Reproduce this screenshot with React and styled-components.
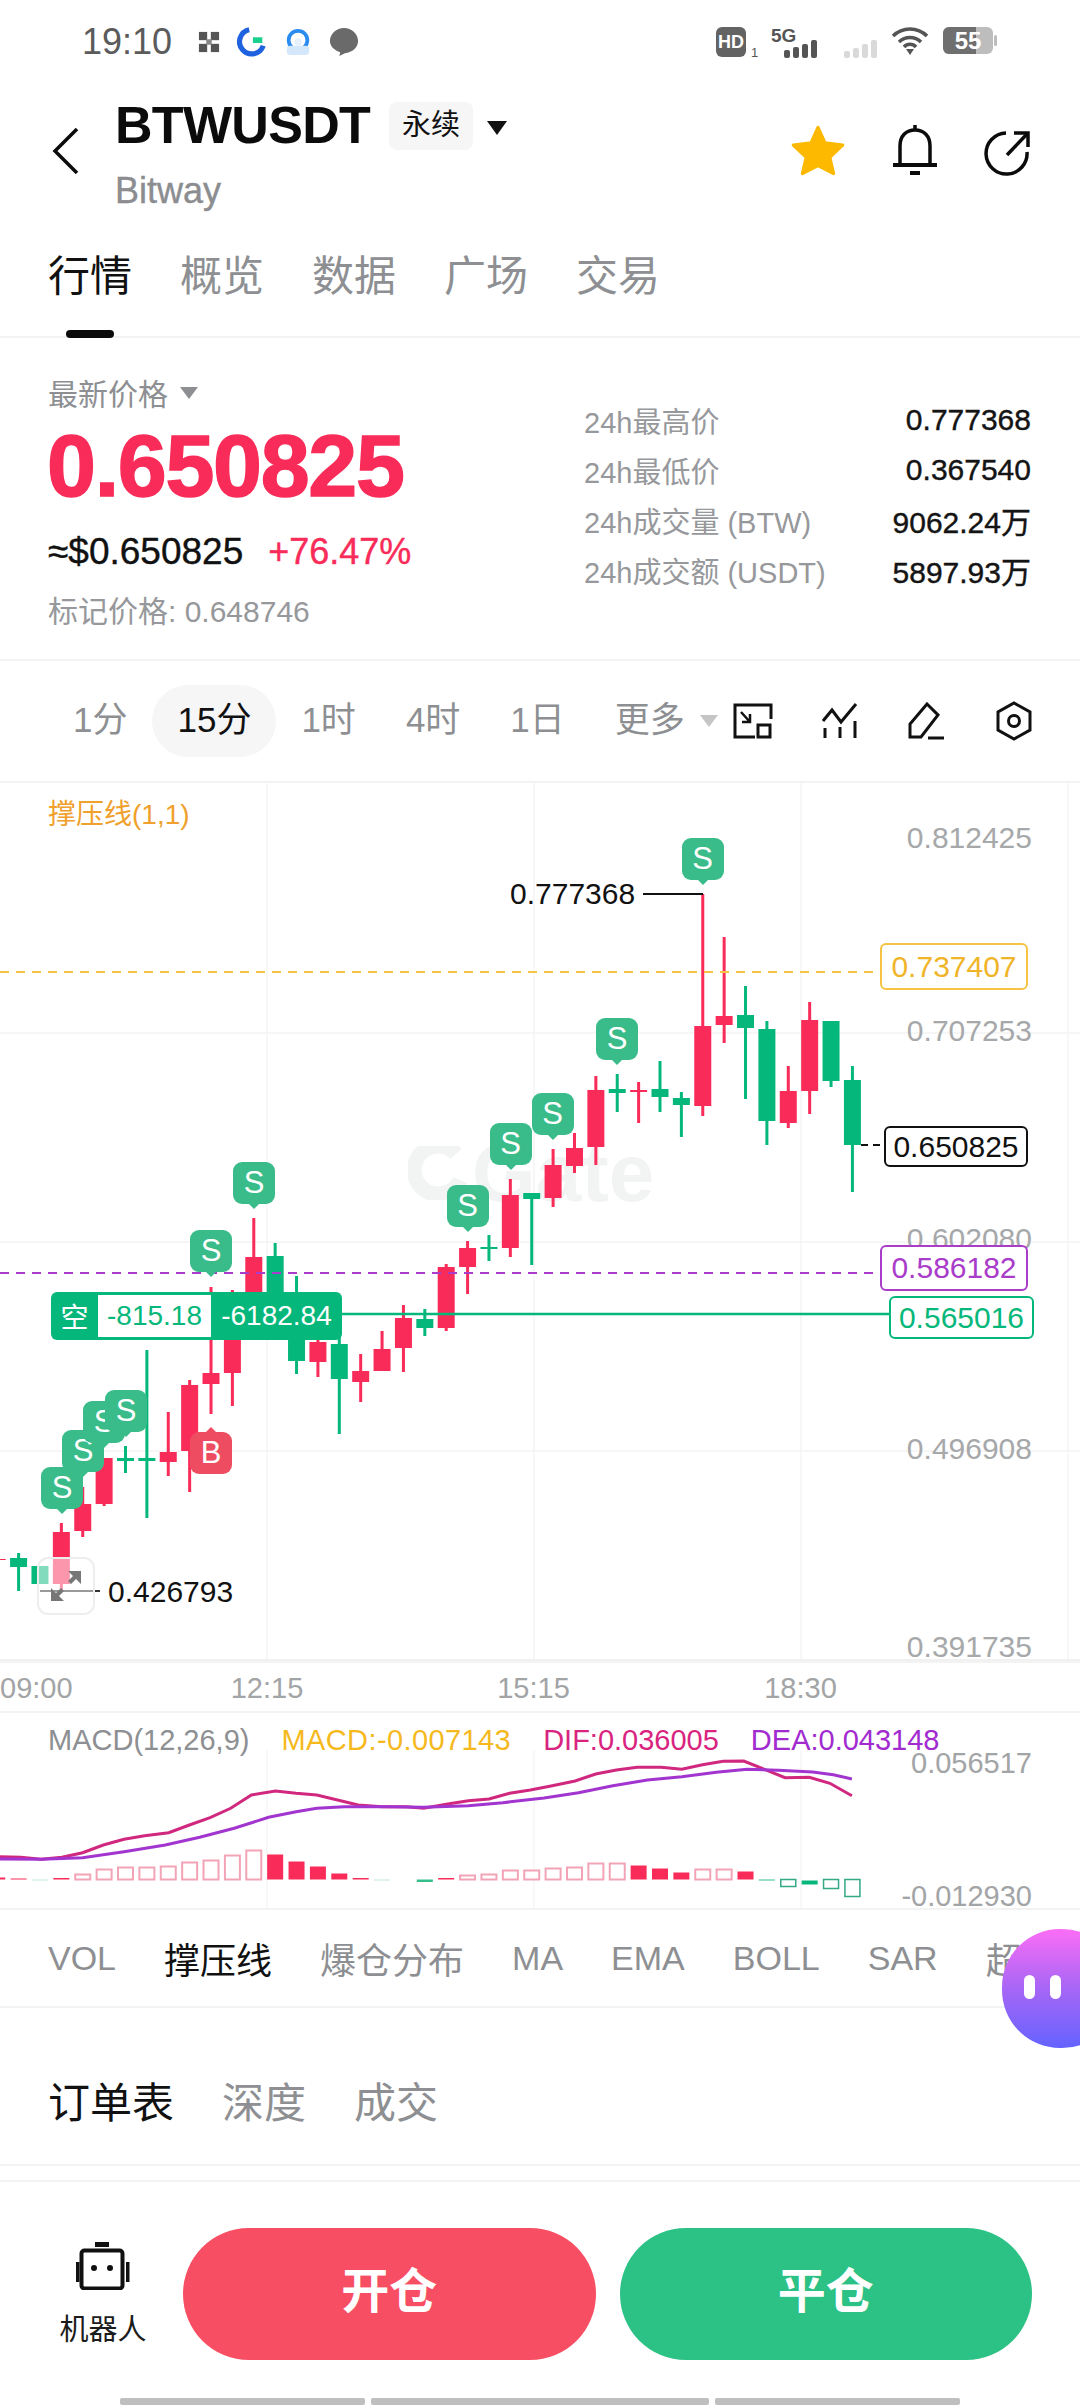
import React from 'react';
import styled, { createGlobalStyle } from 'styled-components';

const SANS = `"Liberation Sans", "Noto Sans CJK SC", sans-serif`;
const CHART_TOP = 783;
const RED = '#f92c59';
const GREEN = '#05b77a';

const GlobalStyle = createGlobalStyle`
  html, body { margin: 0; padding: 0; background: #fff; }
  * { box-sizing: border-box; }
`;

const Page = styled.div`
  position: relative;
  width: 1080px;
  height: 2408px;
  overflow: hidden;
  background: #fff;
  color: #111;
  font-family: ${SANS};
`;

/* status bar */
const StatusBar = styled.div`
  height: 84px;
  display: flex;
  align-items: flex-start;
  justify-content: space-between;
  padding: 26px 83px 0 82px;
`;
const StatusLeft = styled.div`
  display: flex;
  align-items: center;
  gap: 17px;
`;
const Clock = styled.span`
  font-size: 36px;
  line-height: 32px;
  color: #5b5b5b;
  margin-right: 9px;
`;
const StatusRight = styled.div`
  display: flex;
  align-items: flex-start;
  gap: 12px;
`;
const Dimmed = styled.span`
  display: block;
  margin: 14px 0 0 11px;
`;

/* header */
const Header = styled.header`
  height: 152px;
  display: flex;
  padding: 0 50px 0 52px;
`;
const BackBtn = styled.div`
  width: 63px;
  padding-top: 44px;
`;
const TitleBlock = styled.div`
  display: flex;
  flex-direction: column;
`;
const TitleRow = styled.div`
  display: flex;
  align-items: flex-start;
  margin-top: 18px;
`;
const Title = styled.h1`
  margin: 0 19px 0 0;
  font-size: 52px;
  line-height: 47px;
  font-weight: 700;
  letter-spacing: -0.7px;
  color: #0b0b0b;
`;
const Tag = styled.span`
  width: 84px;
  height: 48px;
  border-radius: 8px;
  background: #f6f6f6;
  font-size: 29px;
  line-height: 46px;
  text-align: center;
`;
const Caret = styled.i`
  display: block;
  flex-shrink: 0;
  margin: ${p => p.$margin || '0'};
  border-left: ${p => p.$size}px solid transparent;
  border-right: ${p => p.$size}px solid transparent;
  border-top: ${p => p.$size * 1.4}px solid ${p => p.$color};
`;
const SubTitle = styled.div`
  margin-top: 21px;
  font-size: 36px;
  line-height: 40px;
  -webkit-text-stroke: 0.4px #8b8d90;
  color: #8b8d90;
`;
const HeaderActions = styled.div`
  margin-left: auto;
  padding-top: 36px;
  display: flex;
  align-items: flex-start;
  gap: 48px;
`;

/* main tabs */
const Tabs = styled.nav`
  height: 102px;
  display: flex;
  gap: 48px;
  padding: 19px 0 0 48px;
  border-bottom: 2px solid #f3f3f3;
`;
const Tab = styled.div`
  position: relative;
  width: 84px;
  height: 83px;
  font-size: 42px;
  line-height: 44px;
  text-align: center;
  color: ${p => (p.$active ? '#111' : '#8d8f92')};
  ${p => p.$active && `
    &::after {
      content: '';
      position: absolute;
      left: 18px;
      bottom: 0;
      width: 48px;
      height: 8px;
      border-radius: 4px;
      background: #0b0b0b;
    }
  `}
`;

/* price block */
const PriceSection = styled.section`
  height: 323px;
  display: flex;
  border-bottom: 2px solid #f3f3f3;
`;
const PriceLeft = styled.div`
  width: 584px;
  padding: 35px 0 0 47px;
`;
const PriceLabel = styled.div`
  display: flex;
  align-items: center;
  height: 38px;
  margin-left: 1px;
  font-size: 30px;
  color: #8d8f92;
`;
const BigPrice = styled.div`
  margin-top: 12px;
  height: 86px;
  font-size: 88px;
  line-height: 86px;
  font-weight: 700;
  letter-spacing: -1.3px;
  -webkit-text-stroke: 1.5px ${RED};
  color: ${RED};
`;
const PriceSub = styled.div`
  margin: 21px 0 0 1px;
  display: flex;
  gap: 25px;
  height: 44px;
  align-items: center;
  font-size: 37px;
  -webkit-text-stroke: 0.4px currentColor;
`;
const Change = styled.span`
  font-size: 36px;
  color: ${RED};
`;
const MarkPrice = styled.div`
  margin: 18px 0 0 1px;
  font-size: 30px;
  line-height: 40px;
  color: #96989b;
`;
const Stats = styled.div`
  flex: 1;
  padding: 57px 49px 0 0;
`;
const StatRow = styled.div`
  height: 50px;
  display: flex;
  justify-content: space-between;
  align-items: center;
  font-size: 30px;
`;
const StatLabel = styled.span`
  font-size: 29px;
  color: #96989b;
`;
const StatValue = styled.span`
  color: #141414;
  -webkit-text-stroke: 0.4px #141414;
`;

/* interval row */
const IntervalRow = styled.div`
  height: 122px;
  display: flex;
  align-items: center;
  padding: 0 48px;
  border-bottom: 2px solid #f3f3f3;
`;
const Interval = styled.div`
  flex-shrink: 0;
  height: 72px;
  padding: 0 25px;
  border-radius: 36px;
  font-size: 35px;
  line-height: 70px;
  white-space: nowrap;
  color: ${p => (p.$active ? '#111' : '#8d8f92')};
  background: ${p => (p.$active ? '#f6f6f6' : 'transparent')};
`;
const ToolIcons = styled.div`
  margin-left: auto;
  display: flex;
  align-items: center;
  gap: 50px;
`;

/* candle chart */
const ChartWrap = styled.div`
  position: relative;
  height: 878px;
`;
const ChartSvg = styled.svg`
  position: absolute;
  left: 0;
  top: 0;
`;
const Watermark = styled.div`
  position: absolute;
  left: 408px;
  top: ${1146 - CHART_TOP}px;
  display: flex;
  align-items: center;
  gap: 4px;
  font-size: 82px;
  line-height: 54px;
  font-weight: 700;
  color: #f2f4f4;
`;
const IndicatorName = styled.div`
  position: absolute;
  left: 48px;
  top: ${797 - CHART_TOP}px;
  font-size: 28px;
  line-height: 36px;
  color: #f0a02c;
`;
const AxisLabel = styled.div`
  position: absolute;
  right: 48px;
  top: ${p => p.$y - CHART_TOP - 13}px;
  font-size: 30px;
  line-height: 26px;
  color: #a6a8aa;
`;
const PriceTag = styled.div`
  position: absolute;
  left: ${p => p.$x}px;
  top: ${p => p.$y - CHART_TOP}px;
  width: ${p => p.$w}px;
  height: ${p => p.$h}px;
  border: 2px solid ${p => p.$border};
  border-radius: 6px;
  background: #fff;
  font-size: 30px;
  line-height: ${p => p.$h - 4}px;
  text-align: center;
  color: ${p => p.$color};
`;
const ExtremeLabel = styled.div`
  position: absolute;
  left: ${p => p.$x}px;
  top: ${p => p.$y - CHART_TOP - 18}px;
  font-size: 30px;
  line-height: 36px;
  color: #111;
`;
const Marker = styled.div`
  position: absolute;
  left: ${p => p.$x - 21}px;
  top: ${p => p.$y - CHART_TOP}px;
  width: 42px;
  height: 42px;
  border-radius: 9px;
  background: ${p => (p.$buy ? '#ee4d61' : '#39bc89')};
  color: #fff;
  font-size: 31px;
  line-height: 42px;
  text-align: center;
  &::after {
    content: '';
    position: absolute;
    left: 16px;
    ${p => (p.$buy ? 'top: -5px;' : 'bottom: -5px;')}
    border-left: 5px solid transparent;
    border-right: 5px solid transparent;
    ${p => (p.$buy ? 'border-bottom: 5px solid #ee4d61;' : 'border-top: 5px solid #39bc89;')}
  }
`;
const PositionTag = styled.div`
  position: absolute;
  left: 51px;
  top: ${1292 - CHART_TOP}px;
  width: 291px;
  height: 48px;
  display: flex;
  align-items: center;
  padding: 3px 0;
  border-radius: 6px;
  background: ${GREEN};
  color: #fff;
  font-size: 28px;
`;
const PositionSide = styled.span`
  width: 47px;
  text-align: center;
`;
const PositionPnl = styled.span`
  width: 113px;
  height: 42px;
  line-height: 42px;
  text-align: center;
  background: #fff;
  color: ${GREEN};
`;
const PositionValue = styled.span`
  flex: 1;
  text-align: center;
`;
const FullscreenBtn = styled.div`
  position: absolute;
  left: 37px;
  top: ${1557 - CHART_TOP}px;
  width: 58px;
  height: 58px;
  border: 2px solid #eeeeee;
  border-radius: 11px;
  background: rgba(255, 255, 255, 0.5);
  display: flex;
  align-items: center;
  justify-content: center;
`;

/* time axis */
const TimeAxis = styled.div`
  height: 52px;
  display: grid;
  grid-template-columns: 134px 266px 267px 267px;
  border-top: 2px solid #f3f3f3;
  border-bottom: 2px solid #f3f3f3;
  font-size: 29px;
  line-height: 50px;
  color: #a2a4a6;
`;
const TimeTick = styled.span`
  text-align: ${p => (p.$first ? 'left' : 'center')};
`;

/* MACD */
const MacdPanel = styled.div`
  position: relative;
  height: 197px;
  border-bottom: 2px solid #f3f3f3;
`;
const MacdLegend = styled.div`
  position: relative;
  display: flex;
  gap: 32px;
  padding: 9px 0 0 48px;
  font-size: 29px;
  line-height: 36px;
`;
const LegendItem = styled.span`
  color: ${p => p.$color};
  ${p => p.$spread && 'letter-spacing: 0.4px;'}
`;
const MacdAxis = styled.div`
  position: absolute;
  right: 48px;
  top: ${p => p.$y - 1713 - 18}px;
  font-size: 29px;
  line-height: 36px;
  color: #a2a4a6;
`;

/* indicator strip */
const IndicatorRow = styled.div`
  height: 98px;
  display: flex;
  align-items: center;
  gap: 48px;
  padding-left: 48px;
  white-space: nowrap;
  border-bottom: 2px solid #f3f3f3;
`;
const Indicator = styled.span`
  font-size: ${p => (p.$latin ? 34 : 36)}px;
  color: ${p => (p.$active ? '#111' : '#8d8f92')};
`;

/* order tabs */
const OrderTabs = styled.div`
  height: 158px;
  display: flex;
  align-items: flex-start;
  gap: 48px;
  padding: 72px 0 0 48px;
  border-bottom: 2px solid #f3f3f3;
`;
const OrderTab = styled.span`
  font-size: 42px;
  line-height: 48px;
  color: ${p => (p.$active ? '#111' : '#8d8f92')};
`;
const Spacer = styled.div`
  height: 16px;
  border-bottom: 2px solid #f3f3f3;
`;

/* bottom actions */
const ActionBar = styled.div`
  display: flex;
  align-items: flex-start;
  gap: 24px;
  padding: 46px 48px 0 0;
`;
const RobotBtn = styled.div`
  flex: 0 0 159px;
  padding: 14px 0 0 47px;
  display: flex;
  flex-direction: column;
  align-items: center;
  font-size: 29px;
  line-height: 36px;
  color: #1c1c1c;
  gap: 22px;
`;
const TradeBtn = styled.div`
  flex: 1;
  height: 132px;
  border-radius: 66px;
  background: ${p => p.$bg};
  color: #fff;
  font-size: 48px;
  font-weight: 700;
  line-height: 128px;
  text-align: center;
`;

/* gesture bar */
const GestureBar = styled.div`
  position: absolute;
  left: 120px;
  top: 2398px;
  display: flex;
  gap: 6px;
`;
const GestureSeg = styled.i`
  display: block;
  width: ${p => p.$w}px;
  height: 7px;
  border-radius: 2px;
  background: #bfbfbf;
`;

/* floating assistant */
const Bubble = styled.div`
  position: absolute;
  left: 1002px;
  top: 1929px;
  width: 118px;
  height: 119px;
  border-radius: 58px;
  background: linear-gradient(180deg, #fb6df6 0%, #a766f6 50%, #6463ff 100%);
  display: flex;
  gap: 15px;
  padding: 46px 0 0 22px;
`;
const BubbleEye = styled.i`
  display: block;
  width: 11px;
  height: 24px;
  border-radius: 6px;
  background: #fff;
`;

const candles = [
  ['r', 1558, 1559, 1560, 1561],
  ['g', 1553, 1558, 1567, 1591],
  ['g', 1566, 1566, 1584, 1584],
  ['r', 1523, 1532, 1584, 1592],
  ['r', 1487, 1504, 1531, 1537],
  ['r', 1458, 1458, 1504, 1506],
  ['g', 1446, 1458, 1461, 1473],
  ['g', 1350, 1458, 1461, 1518],
  ['r', 1412, 1452, 1462, 1476],
  ['r', 1380, 1385, 1451, 1492],
  ['r', 1287, 1373, 1384, 1414],
  ['r', 1290, 1300, 1373, 1406],
  ['r', 1218, 1257, 1335, 1335],
  ['g', 1243, 1256, 1335, 1335],
  ['g', 1276, 1330, 1361, 1374],
  ['r', 1340, 1342, 1362, 1377],
  ['g', 1335, 1344, 1379, 1434],
  ['r', 1354, 1371, 1382, 1402],
  ['r', 1331, 1349, 1371, 1371],
  ['r', 1305, 1318, 1348, 1372],
  ['g', 1309, 1319, 1328, 1336],
  ['r', 1264, 1267, 1328, 1331],
  ['r', 1241, 1248, 1267, 1294],
  ['g', 1235, 1247, 1249, 1261],
  ['r', 1179, 1195, 1248, 1257],
  ['g', 1193, 1193, 1199, 1265],
  ['r', 1149, 1165, 1198, 1207],
  ['r', 1133, 1148, 1166, 1173],
  ['r', 1076, 1090, 1147, 1165],
  ['g', 1074, 1089, 1093, 1112],
  ['r', 1082, 1090, 1092, 1123],
  ['g', 1061, 1089, 1097, 1112],
  ['g', 1092, 1098, 1105, 1137],
  ['r', 894, 1026, 1106, 1116],
  ['r', 937, 1016, 1025, 1043],
  ['g', 986, 1015, 1028, 1099],
  ['g', 1021, 1029, 1121, 1145],
  ['r', 1066, 1091, 1123, 1128],
  ['r', 1002, 1020, 1091, 1114],
  ['g', 1021, 1021, 1081, 1087],
  ['g', 1066, 1080, 1145, 1192],
];
const candleX = i => 18.6 + 21.38 * (i - 1);

const markers = [
  [62, 1467], [83, 1430], [104, 1401], [126, 1390], [211, 1230], [254, 1162],
  [467.6, 1185], [510.6, 1123], [552.6, 1093], [617, 1018], [702.7, 838],
];

// [type, height from the zero line], s solid red, h hollow red, g/gb green, gh hollow green, fg faint green
const macdBars = [
  ['s', 2], ['s', 1], ['fg', -1], ['s', 1.5], ['h', 5], ['h', 10], ['h', 12], ['h', 12], ['h', 13], ['h', 17],
  ['h', 19], ['h', 24], ['h', 29], ['s', 25], ['s', 18], ['s', 13], ['s', 6], ['s', 1.5], ['fg', -1], null,
  ['g', -2.5], ['s', 1.5], ['h', 4], ['h', 5], ['h', 9], ['h', 9], ['h', 11], ['h', 12], ['h', 16], ['h', 16],
  ['s', 14], ['s', 11], ['s', 7], ['h', 10], ['h', 10], ['s', 8], ['g', -1], ['gh', -7], ['gb', -4], ['gh', -9], ['gh', -17],
];

const dif = [[0,530],[30,532],[60,538],[90,532],[120,518],[150,495],[180,478],[210,467],[245,458],[275,435],[305,413],[335,385],[365,345],[400,333],[430,340],[460,345],[490,360],[520,375],[555,380],[590,380],[615,385],[650,372],[680,362],[710,357],[740,340],[770,330],[800,318],[835,303],[865,282],[895,270],[925,262],[960,262],[990,268],[1020,254],[1050,244],[1080,243],[1110,268],[1140,293],[1175,292],[1205,310],[1237,347]];
const dea = [[0,537],[60,538],[120,533],[180,515],[240,495],[290,472],[340,445],[390,412],[430,395],[460,385],[500,380],[560,380],[615,382],[680,377],[730,368],[790,354],[840,338],[890,317],[940,300],[990,290],[1040,277],[1085,268],[1130,271],[1180,276],[1210,284],[1237,297]];
const toLine = pts => pts.map(([x, y]) => `${(x / 1.452).toFixed(1)},${(1680 + y / 3).toFixed(1)}`).join(' ');

const CandleChart = () => (
  <ChartSvg width="1080" height="878" viewBox={`0 ${CHART_TOP} 1080 878`}>
    {[267, 534, 801, 1068].map(x => (
      <line key={x} x1={x} x2={x} y1={CHART_TOP} y2={1660} stroke="#f5f5f5" strokeWidth="1.5" />
    ))}
    {[1033, 1242, 1451].map(y => (
      <line key={y} x1="0" x2="1080" y1={y} y2={y} stroke="#f3f3f3" strokeWidth="1.5" />
    ))}
    <line x1="0" x2="1080" y1="1660" y2="1660" stroke="#f1f1f1" strokeWidth="2" />
    {candles.map(([c, high, top, bottom, low], i) => {
      const x = candleX(i);
      const fill = c === 'r' ? RED : GREEN;
      return (
        <g key={i} fill={fill}>
          <rect x={x - 1.5} y={high} width="3" height={low - high} />
          <rect x={x - 8.5} y={top} width="17" height={bottom - top} />
        </g>
      );
    })}
    <line x1="0" x2="880" y1="972" y2="972" stroke="#f6c344" strokeWidth="2" strokeDasharray="9 7" />
    <line x1="0" x2="880" y1="1273" y2="1273" stroke="#a93cc9" strokeWidth="2" strokeDasharray="9 7" />
    <line x1="340" x2="889" y1="1314" y2="1314" stroke={GREEN} strokeWidth="2.5" />
    <line x1="861" x2="884" y1="1145" y2="1145" stroke="#111" strokeWidth="2" strokeDasharray="7 5" />
    <line x1="643" x2="703" y1="894" y2="894" stroke="#111" strokeWidth="2" />
    <line x1="40" x2="100" y1="1591" y2="1591" stroke="#333" strokeWidth="2" />
  </ChartSvg>
);

const MacdChart = () => (
  <ChartSvg width="1080" height="197" viewBox="0 1713 1080 197">
    {[267, 534, 801].map(x => (
      <line key={x} x1={x} x2={x} y1="1750" y2="1909" stroke="#f6f6f6" strokeWidth="1.5" />
    ))}
    {macdBars.map((bar, i) => {
      if (!bar) return null;
      const [type, h] = bar;
      const x = candleX(i);
      const zero = 1879.5;
      const y = h > 0 ? zero - h : zero;
      const height = Math.abs(h);
      if (type === 's') return <rect key={i} x={x - 8} y={y} width="16" height={height} fill={RED} />;
      if (type === 'h') return <rect key={i} x={x - 7.5} y={y} width="15" height={height} fill="#fff" stroke="#f2a3b6" strokeWidth="2" />;
      if (type === 'fg') return <rect key={i} x={x - 8} y={y} width="16" height={height} fill="#bfe8d8" />;
      if (type === 'g') return <rect key={i} x={x - 8} y={y} width="16" height={height} fill="#35bd8c" />;
      if (type === 'gb') return <rect key={i} x={x - 8} y={zero + 1} width="16" height={height} fill={GREEN} />;
      return <rect key={i} x={x - 7.5} y={y} width="15" height={height} fill="#fff" stroke="#35a886" strokeWidth="1.5" />;
    })}
    <polyline points={toLine(dif)} fill="none" stroke="#d1287f" strokeWidth="3" />
    <polyline points={toLine(dea)} fill="none" stroke="#a235cf" strokeWidth="3" />
  </ChartSvg>
);

const StatusIcons = () => (
  <>
    <svg width="22" height="22" viewBox="0 0 24 24">
      <g fill="#555">
        <rect x="1" y="1" width="9" height="9" />
        <rect x="14" y="1" width="9" height="9" />
        <rect x="1" y="14" width="9" height="9" />
        <rect x="14" y="14" width="9" height="9" />
        <rect x="9" y="9" width="6" height="6" fill="#888" />
      </g>
    </svg>
    <svg width="30" height="30" viewBox="0 0 32 32">
      <path d="M13 3 A13 13 0 1 0 28 20" fill="none" stroke="#1f62e0" strokeWidth="5.5" />
      <rect x="17" y="11" width="10" height="6" fill="#16d08c" />
    </svg>
    <svg width="28" height="28" viewBox="0 0 30 30">
      <circle cx="15" cy="13" r="10" fill="none" stroke="#2b8cf0" strokeWidth="4" />
      <rect x="3" y="19" width="24" height="10" rx="4" fill="#d5e8fb" />
      <circle cx="15" cy="15" r="4" fill="#e6f1fc" />
    </svg>
    <svg width="30" height="30" viewBox="0 0 32 32">
      <path d="M16 1c8 0 15 6 15 14 0 7-6 12-14 13l-6 3 1-4C6 25 1 21 1 15 1 7 8 1 16 1z" fill="#6a6a6a" />
    </svg>
  </>
);

const Bars = ({ color }) => (
  <svg width="36" height="18" viewBox="0 0 36 18">
    {[[0, 11], [9, 8], [18, 4], [27, 0]].map(([x, y]) => (
      <rect key={x} x={x + 1} y={y} width="6" height={18 - y} rx="2" fill={color} />
    ))}
  </svg>
);

const NetworkIcons = () => (
  <>
    <svg width="42" height="38" viewBox="0 0 42 38">
      <rect x="0" y="1" width="30" height="30" rx="6" fill="#636363" />
      <text x="15" y="22" textAnchor="middle" fontSize="18" fontWeight="700" fill="#fff" fontFamily="Liberation Sans">HD</text>
      <text x="35" y="31" fontSize="13" fill="#555" fontFamily="Liberation Sans">1</text>
    </svg>
    <svg width="50" height="34" viewBox="0 0 50 34">
      <text x="1" y="16" fontSize="19" fontWeight="700" fill="#555" fontFamily="Liberation Sans">5G</text>
      <g fill="#555">
        <rect x="14" y="24" width="6" height="8" rx="2" />
        <rect x="23" y="21" width="6" height="11" rx="2" />
        <rect x="32" y="18" width="6" height="14" rx="2" />
        <rect x="41" y="14" width="6" height="18" rx="2" />
      </g>
    </svg>
    <Dimmed><Bars color="#d9d9d9" /></Dimmed>
    <svg width="38" height="30" viewBox="0 0 38 30">
      <g fill="none" stroke="#555" strokeWidth="3.5">
        <path d="M2 10 A24 24 0 0 1 36 10" />
        <path d="M8 16 A16 16 0 0 1 30 16" />
        <path d="M13 21 A8 8 0 0 1 25 21" />
      </g>
      <path d="M19 29 l-4 -6 h8z" fill="#555" />
    </svg>
    <svg width="54" height="30" viewBox="0 0 54 30" style={{ marginLeft: 2 }}>
      <rect x="0" y="1" width="50" height="27" rx="6" fill="#bdbdbd" />
      <path d="M6 1 H33 V28 H6 a6 6 0 0 1 -6 -6 V7 a6 6 0 0 1 6 -6z" fill="#6f6f6f" />
      <rect x="51" y="9" width="3" height="11" rx="1.5" fill="#bdbdbd" />
      <text x="25" y="23" textAnchor="middle" fontSize="24" fontWeight="700" fill="#fff" fontFamily="Liberation Sans">55</text>
    </svg>
  </>
);

const HeaderIcons = () => (
  <>
    <svg width="58" height="54" viewBox="0 0 54 50" style={{ marginTop: 4, marginRight: -3 }}>
      <path d="M27 3 L33.5 17.5 L50 19.5 L38 31 L41.5 46 L27 38.5 L12.500 46 L16 31 L4 19.500 L20.500 17.500Z" fill="#fdb900" stroke="#fdb900" strokeWidth="3" strokeLinejoin="round" />
    </svg>
    <svg width="46" height="52" viewBox="0 0 46 52" style={{ marginTop: 4, marginRight: -2 }}>
      <g fill="none" stroke="#0b0b0b" strokeWidth="3.5">
        <path d="M23 1 V6" />
        <path d="M8 41 V22 C8 12 14 6 23 6 C32 6 38 12 38 22 V41" />
        <path d="M1 41 H45" strokeWidth="4" />
      </g>
      <rect x="18" y="47" width="10" height="4" fill="#0b0b0b" />
    </svg>
    <svg width="46" height="46" viewBox="0 0 46 46" style={{ marginTop: 10 }}>
      <g fill="none" stroke="#0b0b0b" strokeWidth="3.5">
        <path d="M22 3 A20.500 20.500 0 1 0 43 22" />
        <path d="M23 25 L43 4" />
        <path d="M30 3 H44 V17" />
      </g>
    </svg>
  </>
);

const ToolbarIcons = () => (
  <>
    <svg width="40" height="36" viewBox="0 0 40 36">
      <g fill="none" stroke="#111" strokeWidth="3">
        <path d="M22 34 H2 V2 H38 V16" />
        <rect x="25" y="22" width="12" height="12" />
        <path d="M8 9 L17 19 M17 11 V19 H9" strokeWidth="2.5" />
      </g>
    </svg>
    <svg width="36" height="36" viewBox="0 0 36 36" style={{ marginLeft: -1 }}>
      <g fill="none" stroke="#111" strokeWidth="3">
        <path d="M1 18 L10 7 L19 19 L34 1" />
        <path d="M3 25 V35 M18 24 V35 M33 18 V35" />
      </g>
    </svg>
    <svg width="38" height="38" viewBox="0 0 38 38" style={{ marginLeft: -1 }}>
      <g fill="none" stroke="#111" strokeWidth="3">
        <path d="M20 2 L31 13 L14 35 H3 V22Z" strokeLinejoin="miter" />
        <path d="M21 36 H37" />
      </g>
    </svg>
    <svg width="36" height="40" viewBox="0 0 36 40" style={{ marginLeft: 1 }}>
      <g fill="none" stroke="#111" strokeWidth="3">
        <path d="M18 2 L34 11 V29 L18 38 L2 29 V11Z" />
        <circle cx="18" cy="20" r="5.500" />
      </g>
    </svg>
  </>
);

const stats = [
  ['24h最高价', '0.777368'],
  ['24h最低价', '0.367540'],
  ['24h成交量 (BTW)', '9062.24万'],
  ['24h成交额 (USDT)', '5897.93万'],
];
const indicators = [
  ['VOL', true], ['撑压线', false, true], ['爆仓分布'], ['MA', true], ['EMA', true], ['BOLL', true], ['SAR', true], ['超'],
];

export default function App() {
  return (
    <Page>
      <GlobalStyle />
      <StatusBar>
        <StatusLeft>
          <Clock>19:10</Clock>
          <StatusIcons />
        </StatusLeft>
        <StatusRight>
          <NetworkIcons />
        </StatusRight>
      </StatusBar>

      <Header>
        <BackBtn>
          <svg width="28" height="46" viewBox="0 0 28 46">
            <path d="M25 1 L3 23 L25 45" fill="none" stroke="#0b0b0b" strokeWidth="3.5" />
          </svg>
        </BackBtn>
        <TitleBlock>
          <TitleRow>
            <Title>BTWUSDT</Title>
            <Tag>永续</Tag>
            <Caret $size={10} $color="#111" $margin="19px 0 0 14px" />
          </TitleRow>
          <SubTitle>Bitway</SubTitle>
        </TitleBlock>
        <HeaderActions>
          <HeaderIcons />
        </HeaderActions>
      </Header>

      <Tabs>
        <Tab $active>行情</Tab>
        <Tab>概览</Tab>
        <Tab>数据</Tab>
        <Tab>广场</Tab>
        <Tab>交易</Tab>
      </Tabs>

      <PriceSection>
        <PriceLeft>
          <PriceLabel>
            最新价格
            <Caret $size={9} $color="#8d8f92" $margin="2px 0 0 12px" />
          </PriceLabel>
          <BigPrice>0.650825</BigPrice>
          <PriceSub>
            <span>≈$0.650825</span>
            <Change>+76.47%</Change>
          </PriceSub>
          <MarkPrice>标记价格: 0.648746</MarkPrice>
        </PriceLeft>
        <Stats>
          {stats.map(([label, value]) => (
            <StatRow key={label}>
              <StatLabel>{label}</StatLabel>
              <StatValue>{value}</StatValue>
            </StatRow>
          ))}
        </Stats>
      </PriceSection>

      <IntervalRow>
        <Interval>1分</Interval>
        <Interval $active>15分</Interval>
        <Interval>1时</Interval>
        <Interval>4时</Interval>
        <Interval>1日</Interval>
        <Interval>更多</Interval>
        <Caret $size={9} $color="#c5c5c5" $margin="0 0 0 -10px" />
        <ToolIcons>
          <ToolbarIcons />
        </ToolIcons>
      </IntervalRow>

      <ChartWrap>
        <Watermark>
          <svg width="60" height="54" viewBox="0 0 60 54">
            <path d="M48 8 A24 24 0 1 0 52 34" fill="none" stroke="#f2f4f4" strokeWidth="15" />
          </svg>
          Gate
        </Watermark>
        <CandleChart />
        <IndicatorName>撑压线(1,1)</IndicatorName>
        <AxisLabel $y={838}>0.812425</AxisLabel>
        <AxisLabel $y={1031}>0.707253</AxisLabel>
        <AxisLabel $y={1239}>0.602080</AxisLabel>
        <AxisLabel $y={1449}>0.496908</AxisLabel>
        <AxisLabel $y={1647}>0.391735</AxisLabel>
        <ExtremeLabel $x={510} $y={894}>0.777368</ExtremeLabel>
        {markers.map(([x, y]) => (
          <Marker key={`${x}-${y}`} $x={x} $y={y}>S</Marker>
        ))}
        <Marker $buy $x={211} $y={1432}>B</Marker>
        <PriceTag $x={880} $y={943} $w={148} $h={47} $border="#f6c344" $color="#f0b429">0.737407</PriceTag>
        <PriceTag $x={884} $y={1126} $w={144} $h={41} $border="#111" $color="#111">0.650825</PriceTag>
        <PriceTag $x={880} $y={1245} $w={148} $h={46} $border="#a93cc9" $color="#a93cc9">0.586182</PriceTag>
        <PriceTag $x={889} $y={1296} $w={145} $h={43} $border={GREEN} $color={GREEN}>0.565016</PriceTag>
        <PositionTag>
          <PositionSide>空</PositionSide>
          <PositionPnl>-815.18</PositionPnl>
          <PositionValue>-6182.84</PositionValue>
        </PositionTag>
        <FullscreenBtn>
          <svg width="32" height="32" viewBox="0 0 32 32">
            <g fill="#777">
              <path d="M31 1 V14 L26 9 L21 14 L18 11 L23 6 L18 1Z" />
              <path d="M1 31 V18 L6 23 L11 18 L14 21 L9 26 L14 31Z" />
            </g>
          </svg>
        </FullscreenBtn>
        <ExtremeLabel $x={108} $y={1592}>0.426793</ExtremeLabel>
      </ChartWrap>

      <TimeAxis>
        <TimeTick $first>09:00</TimeTick>
        <TimeTick>12:15</TimeTick>
        <TimeTick>15:15</TimeTick>
        <TimeTick>18:30</TimeTick>
      </TimeAxis>

      <MacdPanel>
        <MacdChart />
        <MacdLegend>
          <LegendItem $color="#8d8f92">MACD(12,26,9)</LegendItem>
          <LegendItem $color="#f5b91e" $spread>MACD:-0.007143</LegendItem>
          <LegendItem $color="#d9247f">DIF:0.036005</LegendItem>
          <LegendItem $color="#a22bd0">DEA:0.043148</LegendItem>
        </MacdLegend>
        <MacdAxis $y={1763}>0.056517</MacdAxis>
        <MacdAxis $y={1896}>-0.012930</MacdAxis>
      </MacdPanel>

      <IndicatorRow>
        {indicators.map(([name, latin, active]) => (
          <Indicator key={name} $latin={latin} $active={active}>{name}</Indicator>
        ))}
      </IndicatorRow>

      <OrderTabs>
        <OrderTab $active>订单表</OrderTab>
        <OrderTab>深度</OrderTab>
        <OrderTab>成交</OrderTab>
      </OrderTabs>
      <Spacer />

      <ActionBar>
        <RobotBtn>
          <svg width="54" height="48" viewBox="0 0 54 48">
            <rect x="19" y="0" width="14" height="5" fill="#111" />
            <rect x="5.500" y="8.500" width="41" height="38" rx="3" fill="none" stroke="#111" strokeWidth="4" />
            <rect x="0" y="20" width="3.500" height="20" fill="#111" />
            <rect x="50" y="20" width="3.500" height="20" fill="#111" />
            <circle cx="18" cy="26" r="3" fill="#111" />
            <circle cx="34" cy="26" r="3" fill="#111" />
          </svg>
          机器人
        </RobotBtn>
        <TradeBtn $bg="#f74e63">开仓</TradeBtn>
        <TradeBtn $bg="#2cc185">平仓</TradeBtn>
      </ActionBar>

      <GestureBar>
        <GestureSeg $w={245} />
        <GestureSeg $w={338} />
        <GestureSeg $w={245} />
      </GestureBar>

      <Bubble>
        <BubbleEye />
        <BubbleEye />
      </Bubble>
    </Page>
  );
}
